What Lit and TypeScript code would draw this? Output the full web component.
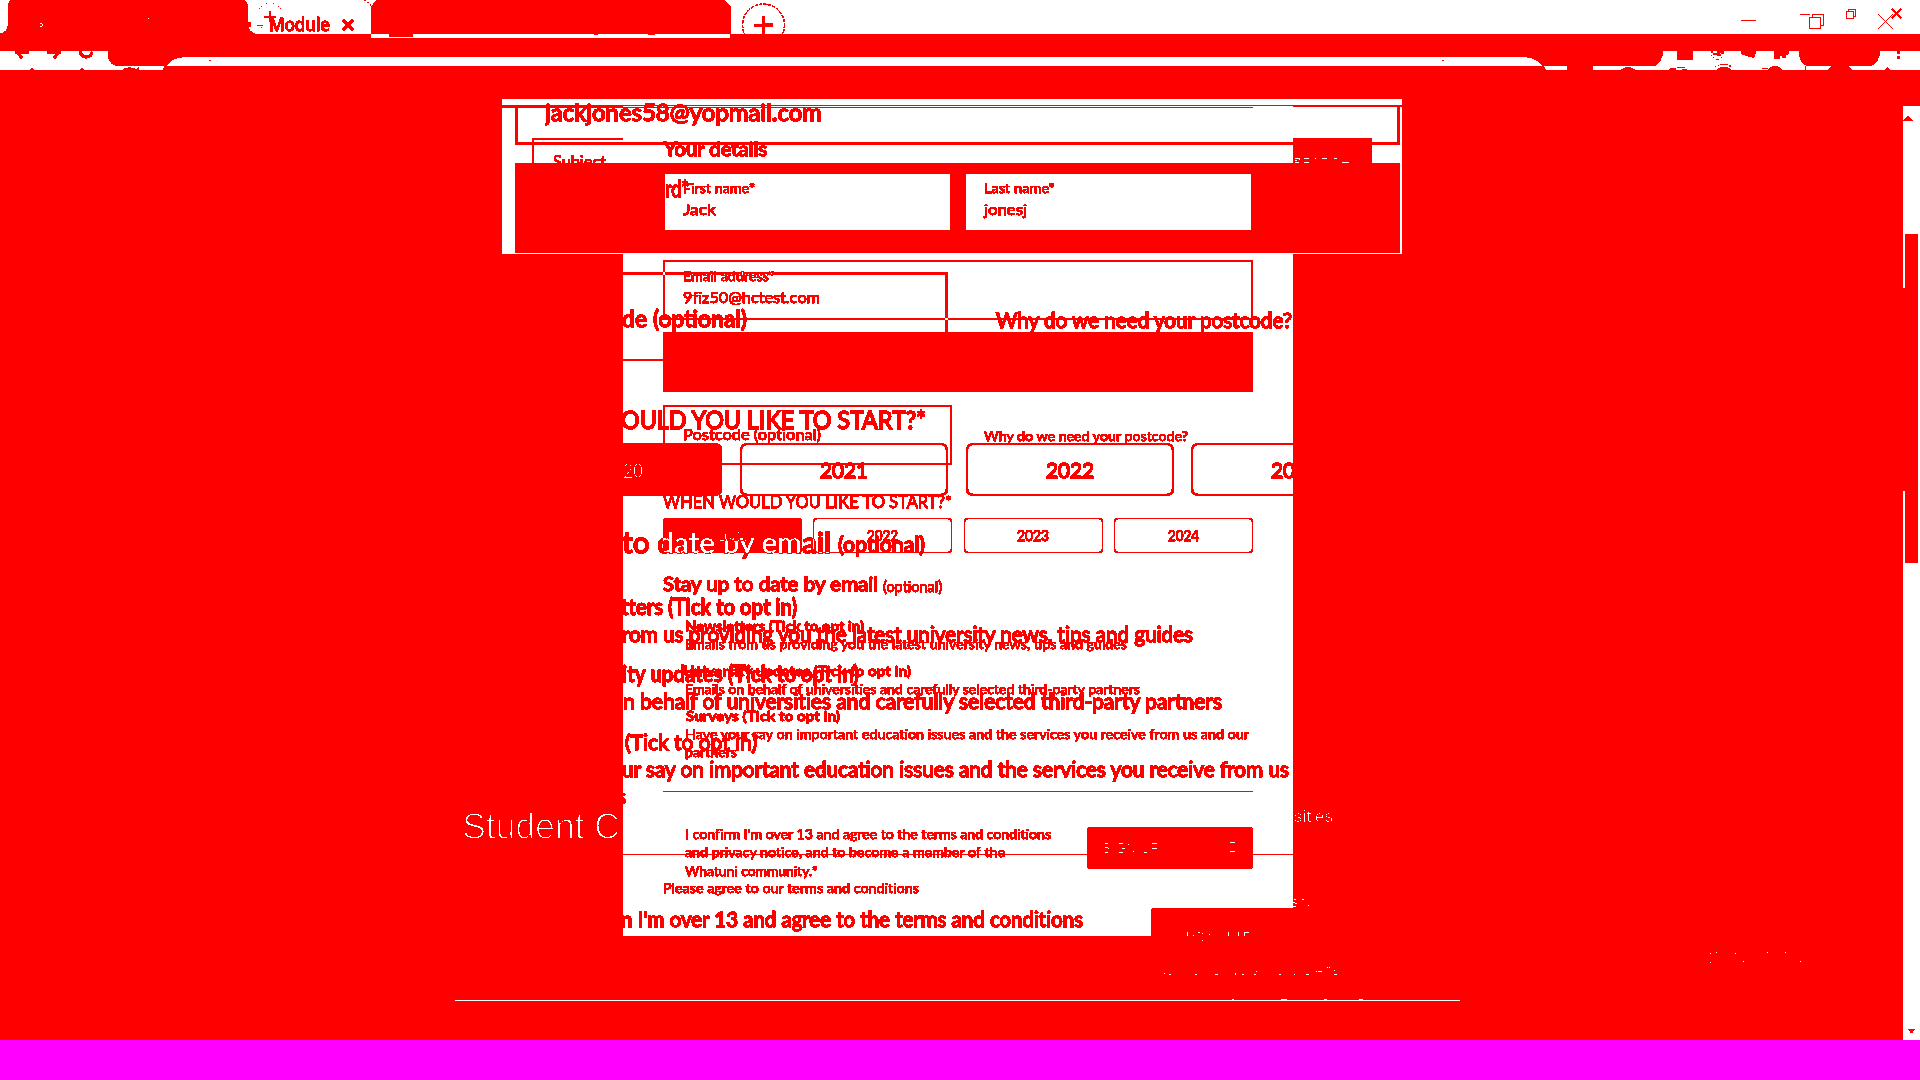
import { LitElement, html, svg, css, type TemplateResult } from "lit";
import { customElement } from "lit/decorators.js";

interface Cell { x: number; w: number; cls: string; text?: string; fs?: number }
interface Row { y: number; h: number; cells: Cell[] }

const t = (b: number, fs: number, ...parts: [number, number, string, string?][]): Row => {
  const h = Math.round(fs * 1.2);
  return {
    y: Math.round(b - h / 2 - 0.387 * fs), h,
    cells: parts.map(([x, r, text, cls]) => ({ x, w: r - x, text, fs, cls: "txt " + (cls ?? "") })),
  };
};
const b = (y: number, y2: number, ...parts: [number, number, string][]): Row => ({
  y, h: y2 - y, cells: parts.map(([x, r, cls]) => ({ x, w: r - x, cls })),
});

const topBlock: Row[] = [
  b(105, 108, [502, 623, "fill"]),
  b(105, 106, [623, 1402, "fill"]),
  b(107, 108, [623, 1253, "fill"]),
  b(105, 107, [1293, 1402, "fill"]),
  b(105, 145, [515, 1400, "box3"]),
  t(120.5, 24, [545, 822, "jackjones58@yopmail.com", "cut big"]),
  b(138, 166, [532, 623, "corner"], [1293, 1372, "fill"]),
  t(169, 17, [553, 606, "Subject"]),
  t(156, 20, [664, 767, "Your details", "big"]),
  b(163, 253, [515, 1400, "fill"]),
  b(174, 230, [665, 950, "paper"], [966, 1251, "paper"]),
  t(196.5, 24, [665, 689, "rd*", "big"]),
  t(193, 14, [683, 755, "First name*"], [984, 1055, "Last name*"]),
  t(215, 16, [683, 716, "Jack"], [984, 1027, "jonesj"]),
];

const smallForm: Row[] = [
  b(260, 320, [663, 1253, "box2"]),
  t(281, 14, [683, 775, "Email address*"]),
  t(303, 16, [683, 820, "9fiz50@hctest.com"]),
  b(405, 465, [663, 952, "box2"]),
  t(440, 15.5, [683, 821, "Postcode (optional)"]),
  t(441, 14, [984, 1188, "Why do we need your postcode?"]),
  t(509, 17, [663, 952, "WHEN WOULD YOU LIKE TO START?*"]),
  b(518, 553, [663, 802, "fill round"], [813, 952, "box1 round"], [964, 1103, "box1 round"], [1114, 1253, "box1 round"]),
  t(541, 14.5, [719, 747, "2021", "ghost"], [867, 898, "2022"], [1017, 1049, "2023"], [1168, 1199, "2024"]),
  t(591, 20, [663, 878, "Stay up to date by email", "big"]),
  t(592, 14.5, [883, 942, "(optional)"]),
  t(631, 14, [685, 864, "Newsletters (Tick to opt in)", "bold"]),
  t(649, 14, [685, 1127, "Emails from us providing you the latest university news, tips and guides"]),
  t(676, 14, [683, 911, "University updates (Tick to opt in)", "bold"]),
  t(694, 14, [685, 1140, "Emails on behalf of universities and carefully selected third-party partners"]),
  t(721, 14, [686, 840, "Surveys (Tick to opt in)", "bold"]),
  t(739, 14, [685, 1249, "Have your say on important education issues and the services you receive from us and our"]),
  t(757, 14, [685, 737, "partners"]),
  b(791, 792, [663, 1253, "fill"]),
  b(827, 869, [1087, 1253, "fill round"]),
  t(839, 14, [685, 1051, "I confirm I'm over 13 and agree to the terms and conditions"]),
  t(857, 14, [685, 1005, "and privacy notice, and to become a member of the"]),
  t(876, 14, [685, 818, "Whatuni community.*"]),
  t(893, 14, [663, 919, "Please agree to our terms and conditions"]),
];

const largeForm: Row[] = [
  b(272, 332, [600, 948, "xbox"]),
  t(327, 24, [622, 747, "de (optional)", "big"]),
  t(328, 21.5, [996, 1292, "Why do we need your postcode?", "big"]),
  b(332, 392, [663, 1253, "fill"]),
  b(359, 361, [623, 663, "fill"]),
  t(429, 24.5, [621, 926, "OULD YOU LIKE TO START?*", "big"]),
  b(443, 496, [600, 722, "fill round6"], [740, 948, "box2 round6"], [966, 1174, "box2 round6"], [1191, 1400, "box2 round6"]),
  t(478, 21.5, [623, 643, "20", "ghost"], [820, 868, "2021", "big"], [1046, 1094, "2022", "big"], [1271, 1295, "20", "big"]),
  t(553, 29, [622, 831, "to date by email", "xor"]),
  t(553, 22, [838, 925, "(optional)", "big"]),
  t(616, 22, [621, 797, "tters (Tick to opt in)", "bold"]),
  t(643, 22, [622, 1193, "rom us providing you the latest university news, tips and guides", "big"]),
  t(683, 22, [622, 859, "ity updates (Tick to opt in)", "bold"]),
  t(710, 22, [623, 1222, "n behalf of universities and carefully selected third-party partners", "big"]),
  t(751, 22, [625, 757, "(Tick to opt in)", "big"]),
  t(778, 22, [622, 1289, "ur say on important education issues and the services you receive from us", "big"]),
  t(805, 22, [617, 626, "s", "big"]),
  b(854, 855, [623, 1293, "fill"]),
  t(928, 22, [621, 1083, "n I'm over 13 and agree to the terms and conditions", "big"]),
  b(908, 937, [1151, 1300, "fill roundtl"]),
];

const stack = (left: number, top: number, rows: Row[]): TemplateResult => {
  let y = top;
  return html`${rows.map((r) => {
    const mt = r.y - y;
    y = r.y + r.h;
    let x = left;
    return html`<div class="row" style="margin-top:${mt}px;height:${r.h}px">${r.cells.map((c) => {
      const ml = c.x - x;
      x = c.x + c.w;
      return html`<div class="cell ${c.cls}" style="margin-left:${ml}px;width:${c.w}px;${c.fs ? `font-size:${c.fs}px;line-height:${r.h}px` : ""}">${c.text ? html`<span class="fit" data-w=${c.w}>${c.text}</span>` : ""}</div>`;
    })}</div>`;
  })}`;
};

/* x, y, width of short white dashes lying on the red ground */
const dashes: [number, number, number][] = [
  [1295, 158, 5], [1295, 160, 2], [1299, 159, 1], [1295, 162, 4], [1304, 158, 5], [1304, 162, 5], [1315, 158, 1], [1322, 158, 5], [1334, 158, 3], [1342, 162, 7],
  [1105, 843, 3], [1105, 847, 3], [1108, 848, 1], [1105, 852, 3], [1119, 843, 4], [1122, 848, 3], [1119, 852, 4], [1128, 844, 1], [1133, 851, 1], [1144, 852, 3], [1152, 843, 5], [1152, 848, 5],
  [1230, 842, 5], [1230, 851, 5],
  [1294, 899, 2], [1293, 902, 2], [1295, 903, 2], [1293, 906, 3], [1302, 899, 2], [1308, 905, 1],
  [1193, 935, 1], [1198, 932, 2], [1202, 933, 1], [1202, 940, 1], [1209, 934, 1], [1244, 932, 5],
  [1164, 973, 1], [1169, 974, 2], [1195, 974, 2], [1215, 974, 3], [1235, 973, 1], [1242, 974, 2], [1254, 974, 2], [1256, 971, 1], [1279, 974, 2], [1294, 974, 1], [1306, 974, 3],
  [1316, 971, 1], [1318, 971, 4], [1327, 967, 1], [1329, 967, 1], [1334, 970, 1], [1334, 974, 3],
  [1232, 999, 2], [1281, 999, 6], [1324, 999, 3], [1359, 999, 4],
  [1710, 953, 1], [1716, 952, 1], [1735, 953, 1], [1767, 952, 1], [1785, 952, 1], [1710, 962, 1], [1743, 961, 1], [1800, 961, 1],
];
const posts: [number, number, number][] = [
  [1187, 932, 4], [1228, 932, 4], [1238, 932, 4], [1244, 932, 4], [1235, 973, 2],
];

const chrome = svg`
  <path fill="#fff" d="M0 0H1920V34H255L250 31L248 26V5L244 0H11L8 4V26L6 31L3 33H0Z"/>
  <path fill="#f00" d="M371 34V7L377 0H724L730 6L731 9V34Z"/>
  <path fill="#fff" d="M371 34H730V38H371Z"/>
  <path fill="#f00" d="M389 34H413V37H389ZM594 34H598V35H594ZM648 34H655V35H648Z"/>
  <path fill="#fff" d="M0 51H108V56Q110 65 118 66H165L163 70H0Z"/>
  <path fill="#fff" d="M166 66Q171 58 182 57H1527Q1537 58 1543 66Z"/>
  <path fill="#fff" d="M1543 66H1567V70H1546ZM1593 66H1654Q1662 62 1663 51H1799Q1799 63 1808 66H1870Q1879 63 1880 51H1920V70H1593Z"/>
  <g fill="none" stroke="#f00" stroke-width="2.4">
    <path d="M16 51L22 58M60 51L54 58M80 51Q81 57 86 57Q91 57 92 52M15 52H29M47 52H61"/>
    <path d="M343 20L353 30M353 20L343 30" stroke-width="3"/>
  </g>
  <g fill="#f00" shape-rendering="crispEdges">
    <path d="M30 70L32 67L34 70ZM80 70L82 67L84 70ZM122 70Q128 65 136 69L139 67V70Z"/>
    <path d="M269 11H271V16H276V18H271V22H269V18H264V16H269ZM257 25H263V26H257ZM248 22H251V27H248ZM261 27H262V28H261Z"/>
    <path d="M259 8h1v1h-1zM261 6h1v1h-1zM266 3h1v1h-1zM273 3h1v1h-1zM278 6h1v1h-1zM280 8h1v1h-1zM209 60h2v1h-2zM364 0h2v1h-2zM367 2h2v1h-2zM370 4h1v2h-1z"/>
    <path d="M762 16H765V23H773V27H765V34H762V27H754V24H762Z"/>
    <path d="M1677 51H1693V60H1677ZM1741 51H1756V53L1754 58L1746 56L1741 54ZM1774 51H1789V54L1786 55V58H1782V56H1780V59H1774ZM1897 51H1900V54H1897ZM1897 56H1900V59H1897Z"/>
    <path d="M1567 66H1593V70H1567ZM1620 70Q1628 64 1636 70ZM1668 70L1670 68H1676V70ZM1716 70Q1724 63 1732 70ZM1767 70Q1775 62 1783 70ZM1827 70L1831 66H1848L1852 70ZM1885 70L1887 67L1890 70ZM1805 66H1806V70H1805ZM1442 60H1444V61H1442ZM1677 67H1685V68H1677ZM1682 69H1687V70H1682ZM1762 68H1768V69H1762Z"/>
    <path d="M1716 66H1718V65H1720V64H1728V65H1731V67H1729V65H1719V66H1716V67H1715V66Z"/>
    <path d="M1711 51H1724V54H1721V56H1717V55H1713V53H1711ZM1711 55h1v1h-1zM1713 57h1v1h-1zM1716 59h3v1h-3zM1721 57h1v1h-1z"/>
  </g>
  <path fill="#fff" d="M1713 51H1717V53H1713ZM1720 53H1721V54H1720Z"/>
  <circle cx="763.5" cy="25" r="21" fill="none" stroke="#f00" stroke-width="0.6" stroke-dasharray="3 1.5" pathLength="132"/>
  <path fill="#f00" d="M740 34H786V51H740Z"/>
  <path fill="#fff" d="M40 23h2v1h1v2h-1v1h-2v-1h2v-2h-2zM148 18h1v1h-1z"/>
  <g fill="none" stroke="#f00" shape-rendering="crispEdges">
    <path d="M1741 20.5H1756M1800 14.5H1810"/>
    <path d="M1809.500 17.500H1820.500V28.500H1809.500ZM1812.500 17V14.500H1823.500V25.500H1821M1846.500 11.500H1853.500V18.500H1846.500ZM1848.500 11V9.500H1855.500V16.500H1854"/>
  </g>
  <path fill="none" stroke="#f00" d="M1878 14L1893 29M1893 14L1878 29"/>
  <path fill="none" stroke="#f00" stroke-width="1.6" d="M1892 9L1901 18M1901 9L1892 18"/>`;

@customElement("app-root")
export class AppRoot extends LitElement {
  static styles = css`
    :host { display: block; width: 1920px; height: 1080px; overflow: hidden; font-family: Lato, "Liberation Sans", sans-serif; }
    .screen { position: relative; display: flex; flex-direction: column; height: 1040px; background: #f00; filter: url(#duotone); overflow: hidden; }
    .taskbar { height: 40px; background: #f0f; }
    .chrome { flex: none; display: block; width: 1920px; height: 99px; }
    .defs { position: absolute; width: 0; height: 0; }
    .title { position: absolute; left: 269px; top: 13px; font: 400 18px/22px "Noto Sans", sans-serif; color: #f00; width: 61px; white-space: nowrap; -webkit-text-stroke: 0.5px #f00; }
    .body { position: relative; flex: 1; display: grid; grid-template-columns: 1fr 17px; }
    .page { display: grid; grid-template-columns: 502px 900px; align-items: start; }
    .card { grid-column: 2; grid-row: 1; height: 155px; background: #fff; z-index: 1; }
    .panel { grid-column: 2; grid-row: 1; width: 670px; height: 837px; margin-left: 121px; background: #fff; overflow: hidden; display: grid; align-items: start; z-index: 2; clip-path: inset(155px 0 0 0); }
    .layer { grid-area: 1 / 1; display: flex; flex-direction: column; }
    .row { flex: none; display: flex; }
    .cell { flex: none; box-sizing: border-box; }
    .txt { color: #f00; white-space: pre; font-variant-ligatures: none; -webkit-text-stroke: 0.25px #f00; }
    .fit { display: inline-block; transform-origin: 0 50%; }
    .txt.big { -webkit-text-stroke: 0.8px #f00; }
    .txt.bold { font-weight: 700; -webkit-text-stroke: 0.3px #f00; }
    .txt.ghost { color: #fff; opacity: 0.94; -webkit-text-stroke: 0; }
    .cut { clip-path: inset(6px 0 0 0); }
    .txt.xor { color: #0ff; mix-blend-mode: difference; -webkit-text-stroke: 0.9px #0ff; }
    .xbox { border: 3px solid #0ff; border-bottom: 0; mix-blend-mode: difference; }
    .fill { background: #f00; }
    .paper { background: #fff; }
    .box1 { border: 1px solid #f00; }
    .box2 { border: 2px solid #f00; }
    .box3 { border: 3px solid #f00; border-top: 0; }
    .corner { border: solid #f00; border-width: 2px 0 0 2px; }
    .round { border-radius: 4px; }
    .round6 { border-radius: 7px; }
    .roundtl { border-radius: 4px 0 0 0; }
    .scroll { margin-top: 7px; background: #fff; display: flex; flex-direction: column; }
    .thumb { margin: 128px 2px 0 2px; height: 329px; background: #f00; display: flex; }
    .thumb::before { content: ""; width: 2px; height: 203px; margin: 54px 0 0 -2px; background: #f00; }
    .marks { position: absolute; inset: 0; width: 1920px; height: 1040px; z-index: 4; }
    .thin { font-family: "Liberation Sans", Arial, sans-serif; fill: #fff; stroke: #f00; stroke-width: 0.7px; }
    .thin.small { stroke-width: 0; }
  `;

  firstUpdated() {
    this.renderRoot.querySelectorAll<HTMLElement>(".fit").forEach((el) => {
      const want = Number(el.dataset.w);
      const have = el.getBoundingClientRect().width;
      if (have > 0) el.style.transform = `scaleX(${want / have})`;
    });
  }

  render() {
    return html`
      <div class="screen">
        <svg class="defs"><filter id="duotone" x="0" y="0" width="100%" height="100%" color-interpolation-filters="sRGB">
          <feComponentTransfer>
            <feFuncR type="discrete" tableValues="1"></feFuncR>
            <feFuncG type="discrete" tableValues="0 0 0 0 0 0 0 0 0 0 0 0 0 0 1"></feFuncG>
            <feFuncB type="discrete" tableValues="0 0 0 0 0 0 0 0 0 0 0 0 0 0 1"></feFuncB>
          </feComponentTransfer>
        </filter></svg>
        <svg class="chrome" viewBox="0 0 1920 99">${chrome}</svg>
        <div class="title"><span class="fit" data-w="61">Module</span></div>
        <div class="body">
          <div class="page">
            <div class="card">${stack(502, 99, topBlock)}</div>
            <div class="panel">
              <div class="layer">${stack(623, 99, smallForm)}</div>
              <div class="layer">${stack(623, 99, largeForm)}</div>
            </div>
          </div>
          <div class="scroll"><div class="thumb"></div></div>
        </div>
        <svg class="marks" viewBox="0 0 1920 1040">
          <text class="thin" x="462" y="839" font-size="36" textLength="158">Student C</text>
          <text class="thin small" x="1294" y="822" font-size="17" textLength="39">sities</text>
          <g fill="#fff">
            <rect x="455" y="1000" width="1005" height="1"></rect>
            ${dashes.map(([x, y, w]) => svg`<rect x=${x} y=${y} width=${w} height="1"/>`)}
            ${posts.map(([x, y, h]) => svg`<rect x=${x} y=${y} width="1" height=${h}/>`)}
          </g>
          <path fill="#f00" d="M1903 121L1908 116L1913 121ZM1908 1029H1915L1911.500 1033Z"></path>
        </svg>
      </div>
      <div class="taskbar"></div>`;
  }
}
